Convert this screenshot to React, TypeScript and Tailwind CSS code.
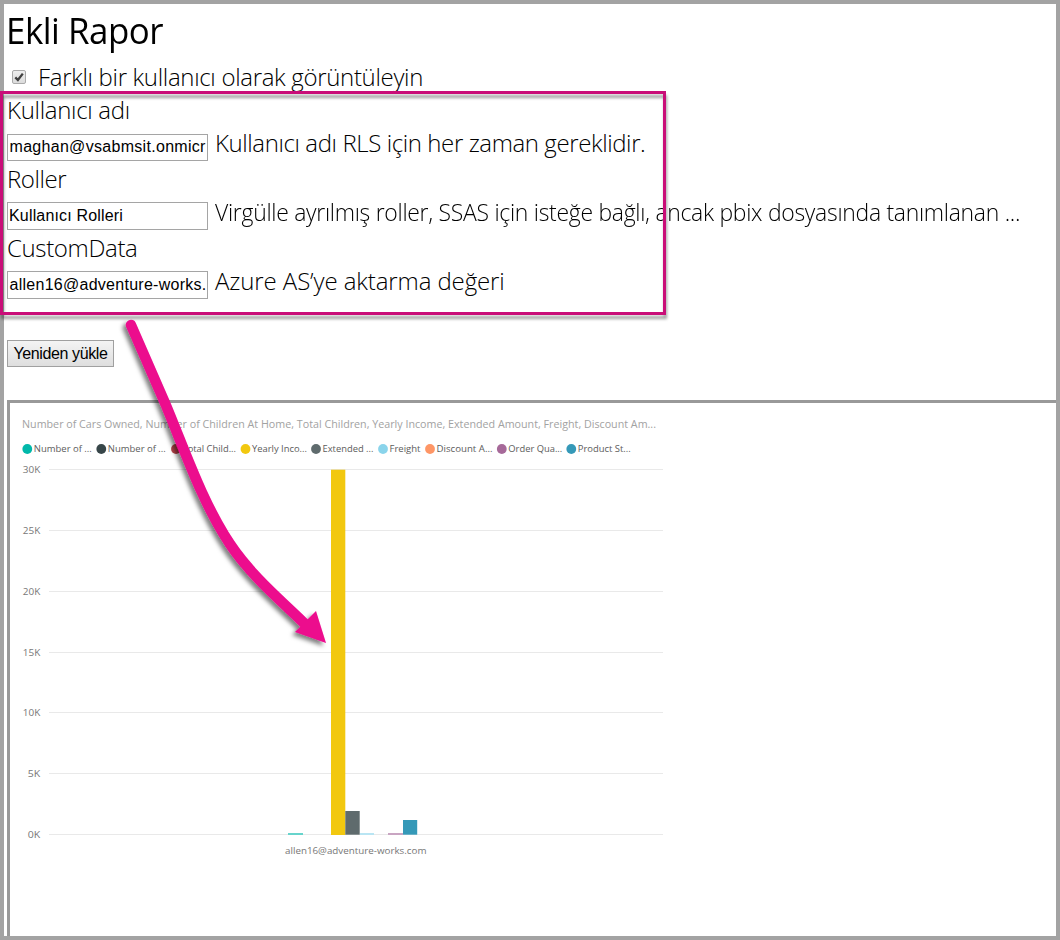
import React from "react";

type FieldProps = {
  label: string;
  value: string;
  hint: string;
  boxClass: string;
  valueClass: string;
  labelClass: string;
  hintClass: string;
};

function Field({ label, value, hint, boxClass, valueClass, labelClass, hintClass }: FieldProps) {
  return (
    <div className="flex h-[69px] flex-col">
      <div className="h-[36px] leading-[33px]">
        <span className={labelClass}>{label}</span>
      </div>
      <div className="flex h-[33px]">
        <div className={`flex w-[201px] shrink-0 items-start border border-[#a5a5a5] bg-white pl-[1px] font-['Liberation_Sans',sans-serif] text-[16px] font-normal text-black ${boxClass}`}>
          <div className="whitespace-nowrap leading-[24px]">
            <span className={valueClass}>{value}</span>
          </div>
        </div>
        <div className="-mt-[4px] ml-[7px] whitespace-nowrap leading-[35px]">
          <span className={hintClass}>{hint}</span>
        </div>
      </div>
    </div>
  );
}

const legend = [
  { x: 27.3, color: "#01b8aa", label: "Number of ...", w: 58 },
  { x: 101.3, color: "#374649", label: "Number of ...", w: 58 },
  { x: 176, color: "#b8434a", label: "Total Child...", w: 53.5 },
  { x: 245.5, color: "#f2c80f", label: "Yearly Inco...", w: 55 },
  { x: 316, color: "#5f6b6d", label: "Extended ...", w: 51 },
  { x: 383, color: "#8ad4eb", label: "Freight", w: 31 },
  { x: 430, color: "#fe9666", label: "Discount A...", w: 56 },
  { x: 501.8, color: "#a66999", label: "Order Qua...", w: 54 },
  { x: 571.3, color: "#3599b8", label: "Product St...", w: 53 },
];

const ticks = ["30K", "25K", "20K", "15K", "10K", "5K", "0K"];

function Chart() {
  return (
    <svg width="660" height="480" viewBox="10 403 660 480" className="block font-['Open_Sans','Noto_Sans',sans-serif]">
      <text x="22" y="428" fontSize="10.8" fill="#a2a2a2" textLength="634" lengthAdjust="spacingAndGlyphs">
        Number of Cars Owned, Number of Children At Home, Total Children, Yearly Income, Extended Amount, Freight, Discount Am...
      </text>
      {legend.map((l) => (
        <g key={l.x}>
          <circle cx={l.x} cy="449" r="4.9" fill={l.color} />
          <text x={l.x + 6.5} y="452.3" fontSize="9.6" fill="#5c5c5c" textLength={l.w} lengthAdjust="spacingAndGlyphs">
            {l.label}
          </text>
        </g>
      ))}
      {ticks.map((t, i) => {
        const y = 469 + Math.round(i * 60.85);
        return (
          <g key={t}>
            <rect x="49" y={y} width="614" height="1" fill="#e9e9e9" />
            <text x="40.3" y={y + 4} fontSize="9.4" fill="#777" textAnchor="end" textLength={t.length === 3 ? 17.5 : 12.5} lengthAdjust="spacingAndGlyphs">
              {t}
            </text>
          </g>
        );
      })}
      <rect x="288" y="833" width="15" height="2" fill="#67d4cc" />
      <rect x="331" y="469.7" width="14.3" height="365.3" fill="#f2c80f" />
      <rect x="345.3" y="811" width="14.4" height="23.7" fill="#5f6b6d" />
      <rect x="360" y="833" width="14" height="2" fill="#b9e5f3" />
      <rect x="388" y="833" width="15" height="2" fill="#c9a5c2" />
      <rect x="403" y="820" width="14.2" height="14.7" fill="#3599b8" />
      <text x="285" y="854" fontSize="9.6" fill="#777" textLength="141.5" lengthAdjust="spacingAndGlyphs">
        allen16@adventure-works.com
      </text>
    </svg>
  );
}

function Annotation() {
  return (
    <svg width="1060" height="940" viewBox="0 0 1060 940" className="pointer-events-none absolute left-0 top-0">
      <defs>
        <filter id="boxShadow" x="-5%" y="-5%" width="110%" height="115%">
          <feDropShadow dx="1" dy="4" stdDeviation="1.8" floodColor="#000" floodOpacity="0.38" />
        </filter>
        <filter id="arrowShadow" x="-10%" y="-10%" width="120%" height="120%">
          <feDropShadow dx="-3" dy="3" stdDeviation="2" floodColor="#000" floodOpacity="0.5" />
        </filter>
      </defs>
      <rect x="1.5" y="92.5" width="663" height="221" fill="none" stroke="#c90c78" strokeWidth="3" filter="url(#boxShadow)" />
      <g filter="url(#arrowShadow)">
        <path d="M131 325 L165 403 C184 448 202 502 230 544 C252 577 284 603 308 627" fill="none" stroke="#ec098d" strokeWidth="10.5" strokeLinecap="round" />
        <path d="M316 611 L326 643 L295 632 Z" fill="#ec098d" />
      </g>
    </svg>
  );
}

export default function App() {
  return (
    <div className="relative h-[940px] w-[1060px] overflow-hidden font-['Open_Sans','Noto_Sans',sans-serif] text-black">
      <div className="flex h-full flex-col border-4 border-[#a3a3a3] bg-white pl-[3px]">
        <h1 className="h-[56px] whitespace-nowrap text-[37px] font-normal leading-[51px]">
          <span className="-ml-[1px] inline-block origin-left scale-x-[0.942] tracking-[-0.5px]">Ekli Rapor</span>
        </h1>
        <div className="flex h-[32px] items-center text-[24px] font-light">
          <div className="ml-[5px] mt-[2px] flex size-[14px] items-center justify-center rounded-[2px] border border-[#aaa] bg-gradient-to-b from-[#eee] to-[#dcdcdc]">
            <svg width="10" height="10" viewBox="0 0 10 10">
              <path d="M1.3 5.4 L3.9 8 L8.8 1.6" fill="none" stroke="#404040" strokeWidth="2.3" />
            </svg>
          </div>
          <span className="ml-[12px] mt-[2px] whitespace-nowrap leading-[32px] tracking-[-0.32px]">Farklı bir kullanıcı olarak görüntüleyin</span>
        </div>
        <div className="flex h-[244px] flex-col pt-[1px] text-[24px] font-light">
          <Field
            label="Kullanıcı adı"
            value="maghan@vsabmsit.onmicr"
            hint="Kullanıcı adı RLS için her zaman gereklidir."
            boxClass="mt-[5px] h-[27px]"
            labelClass="tracking-[-0.3px]"
            valueClass="ml-[0.5px] tracking-[0.3px]"
            hintClass="tracking-[-0.4px]"
          />
          <Field
            label="Roller"
            value="Kullanıcı Rolleri"
            hint="Virgülle ayrılmış roller, SSAS için isteğe bağlı, ancak pbix dosyasında tanımlanan ..."
            boxClass="mt-[4px] h-[28px] pt-[1px]"
            labelClass="tracking-[-0.4px]"
            valueClass="tracking-[0.17px]"
            hintClass="inline-block origin-left scale-x-[0.956] tracking-[-0.3px]"
          />
          <Field
            label="CustomData"
            value="allen16@adventure-works."
            hint="Azure AS’ye aktarma değeri"
            boxClass="mt-[4px] h-[28px] pt-[1px]"
            labelClass="tracking-[-0.35px]"
            valueClass="ml-[0.5px] tracking-[0.27px]"
            hintClass="tracking-[-0.1px]"
          />
        </div>
        <button className="mt-[4px] h-[27px] w-[107px] shrink-0 whitespace-nowrap border border-[#a0a0a0] bg-gradient-to-b from-[#f4f4f4] to-[#dedede] font-['Liberation_Sans',sans-serif] text-[16px] leading-[24px] tracking-[-0.4px]">
          Yeniden yükle
        </button>
        <div className="mt-[33px] min-h-0 flex-1 overflow-hidden border-l-[3px] border-t-[3px] border-[#999]">
          <Chart />
        </div>
      </div>
      <Annotation />
    </div>
  );
}
